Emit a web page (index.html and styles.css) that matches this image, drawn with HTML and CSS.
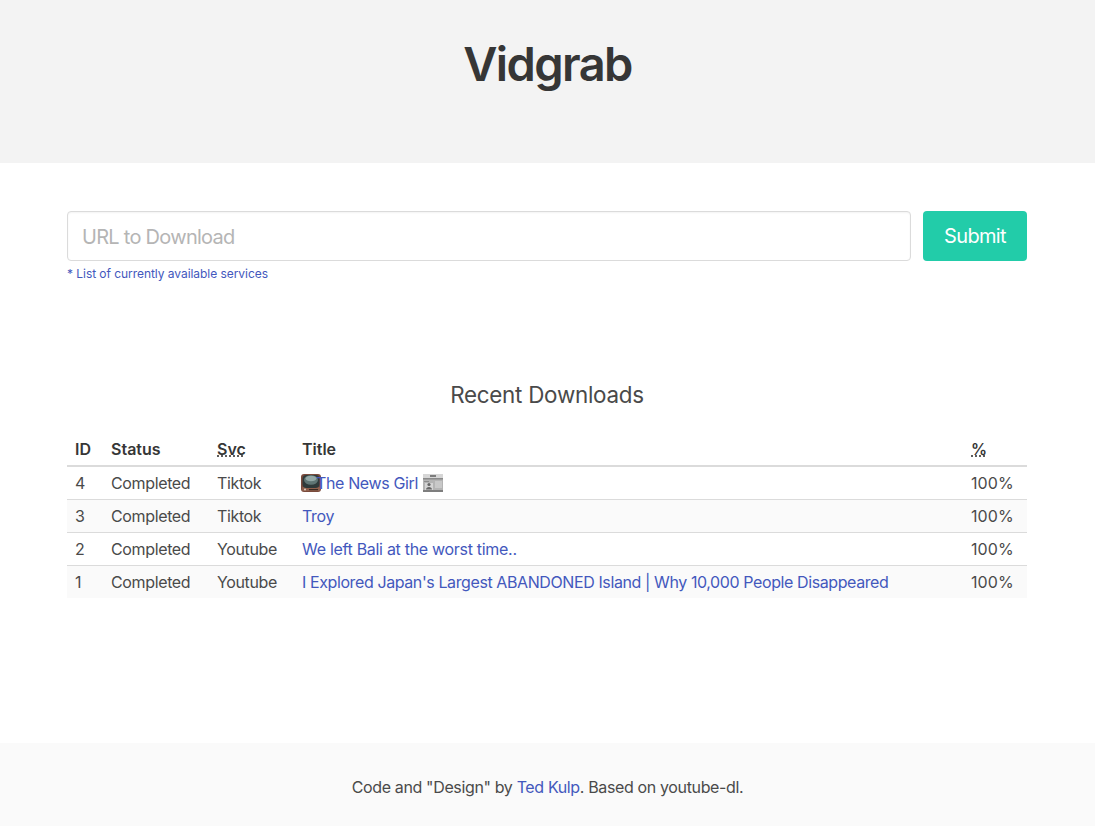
FILE: index.html
```html
<!DOCTYPE html>
<html lang="en">
<head>
<meta charset="utf-8">
<title>Vidgrab</title>
<link rel="stylesheet" href="styles.css">
</head>
<body>
<header class="hero"><h1 class="brand">Vidgrab</h1></header>
<main class="main">
  <form class="form">
    <div class="field">
      <input class="url" type="text" placeholder="URL to Download">
      <button class="submit" type="button">Submit</button>
    </div>
    <a class="help" href="#">* List of currently available services</a>
  </form>
  <h2 class="subtitle">Recent Downloads</h2>
  <table class="table">
    <thead>
      <tr>
        <th class="c-id">ID</th><th class="c-status">Status</th><th class="c-svc"><abbr title="Service">Svc</abbr></th><th class="c-title">Title</th><th class="c-pct"><abbr title="Percent">%</abbr></th>
      </tr>
    </thead>
    <tbody>
      <tr><td>4</td><td>Completed</td><td>Tiktok</td><td><span class="title-line"><svg class="emoji tv" viewBox="0 0 20 20" aria-hidden="true"><rect x="0" y="1" width="20" height="18" rx="3" fill="#7a4b3c"/><rect x="1" y="14" width="18" height="4" rx="1" fill="#8f5f4c"/><circle cx="4" cy="16.5" r="1" fill="#e2d2c0"/><rect x="8" y="16" width="9" height="1.2" fill="#3c2a22"/><rect x="1.5" y="2" width="17" height="13" rx="4" fill="#2f3a3a"/><ellipse cx="10" cy="7" rx="7" ry="4.8" fill="#5f7574"/><ellipse cx="10" cy="5.5" rx="5.5" ry="2.8" fill="#93a8a6"/></svg><a class="lead" href="#">The News Girl</a><svg class="emoji news" viewBox="0 0 20 20" aria-hidden="true"><rect x="0" y="1" width="20" height="18" fill="#b4b4b4"/><rect x="0" y="1" width="20" height="4" fill="#d6d6d6"/><rect x="7" y="2" width="6" height="2" fill="#7c7c7c"/><rect x="0" y="5" width="20" height="1.5" fill="#8a8a8a"/><rect x="1" y="8" width="5" height="1" fill="#8c8c8c"/><rect x="12" y="8" width="7" height="7" fill="#c8c8c8"/><rect x="2" y="10" width="8" height="7" fill="#d4d4d4"/><circle cx="6" cy="11.5" r="1.6" fill="#666"/><path d="M3 16.500c0-3.500 6-3.500 6 0z" fill="#666"/><rect x="0" y="17" width="20" height="2" fill="#7e7e7e"/></svg></span></td><td>100%</td></tr>
      <tr><td>3</td><td>Completed</td><td>Tiktok</td><td><a href="#">Troy</a></td><td>100%</td></tr>
      <tr><td>2</td><td>Completed</td><td>Youtube</td><td><a class="wide" href="#">We left Bali at the worst time..</a></td><td>100%</td></tr>
      <tr><td>1</td><td>Completed</td><td>Youtube</td><td><a class="tight" href="#">I Explored Japan's Largest ABANDONED Island | Why 10,000 People Disappeared</a></td><td>100%</td></tr>
    </tbody>
  </table>
</main>
<footer class="footer">Code and "Design" by <a href="#">Ted Kulp</a>. Based on youtube-dl.</footer>
</body>
</html>
```
FILE: styles.css
```css
* { box-sizing: border-box; }
html, body { margin: 0; height: 826px; overflow: hidden; }
body {
  font-family: Inter, "Liberation Sans", sans-serif;
  font-size: 16px;
  line-height: 24px;
  letter-spacing: -0.36px;
  color: #4a4a4a;
  background: #fff;
  display: flex;
  flex-direction: column;
}
a { color: #4358bd; text-decoration: none; }
.hero {
  height: 163px;
  background: #f3f3f3;
  padding-top: 34px;
  text-align: center;
}
.brand {
  margin: 0;
  font-size: 47px;
  line-height: 60px;
  font-weight: 600;
  letter-spacing: -1.6px;
  color: #363636;
}
.main { flex: 1; padding: 48px 68px 0 67px; }
.field { display: flex; gap: 12px; }
.url {
  flex: 1;
  height: 50px;
  padding: 2px 14px 0;
  border: 1px solid #dbdbdb;
  border-radius: 4px;
  font: inherit;
  font-size: 20px;
  letter-spacing: -0.72px;
  color: #363636;
  box-shadow: inset 0 1px 2px rgba(10,10,10,.05);
  outline: none;
}
.url::placeholder { color: #b5b5b5; opacity: 1; }
.submit {
  width: 104px;
  height: 50px;
  padding: 0;
  border: 0;
  border-radius: 4px;
  background: #22cca9;
  color: #fff;
  font: inherit;
  font-size: 20px;
  letter-spacing: -0.65px;
}
.help { display: block; margin-top: 4px; font-size: 12px; line-height: 18px; letter-spacing: -0.05px; }
.subtitle {
  margin: 98px 0 0;
  text-align: center;
  font-size: 22.4px;
  line-height: 28px;
  font-weight: 400;
  letter-spacing: -0.25px;
  color: #4a4a4a;
}
.table { width: 960px; margin-top: 24px; border-collapse: collapse; table-layout: fixed; }
th, td { height: 33px; text-align: left; vertical-align: top; }
th { color: #363636; font-weight: 600; padding: 4px 8px 0; border-bottom: 2px solid #dbdbdb; letter-spacing: 0; }
td { padding: 4px 8px 0; border-bottom: 1px solid #dbdbdb; }
td:last-child { letter-spacing: 0.1px; }
tbody tr:nth-child(even) { background: #fafafa; }
tbody tr:last-child td { border-bottom: 0; }
abbr { text-decoration: underline dotted; }
.c-id { width: 36px; }
.c-status { width: 106px; }
.c-svc { width: 85px; }
.c-title { width: 669px; }
.c-pct { width: 64px; }
.title-line { display: flex; align-items: center; height: 24px; }
.emoji { width: 20px; height: 20px; flex: none; }
.tv { margin: 0 -5px 0 -1px; }
.news { margin-left: 5px; }
.lead { position: relative; }
.wide { letter-spacing: -0.3px; }
.tight { letter-spacing: -0.4px; }
.footer {
  height: 83px;
  padding-top: 32px;
  background: #fafafa;
  text-align: center;
}
```
